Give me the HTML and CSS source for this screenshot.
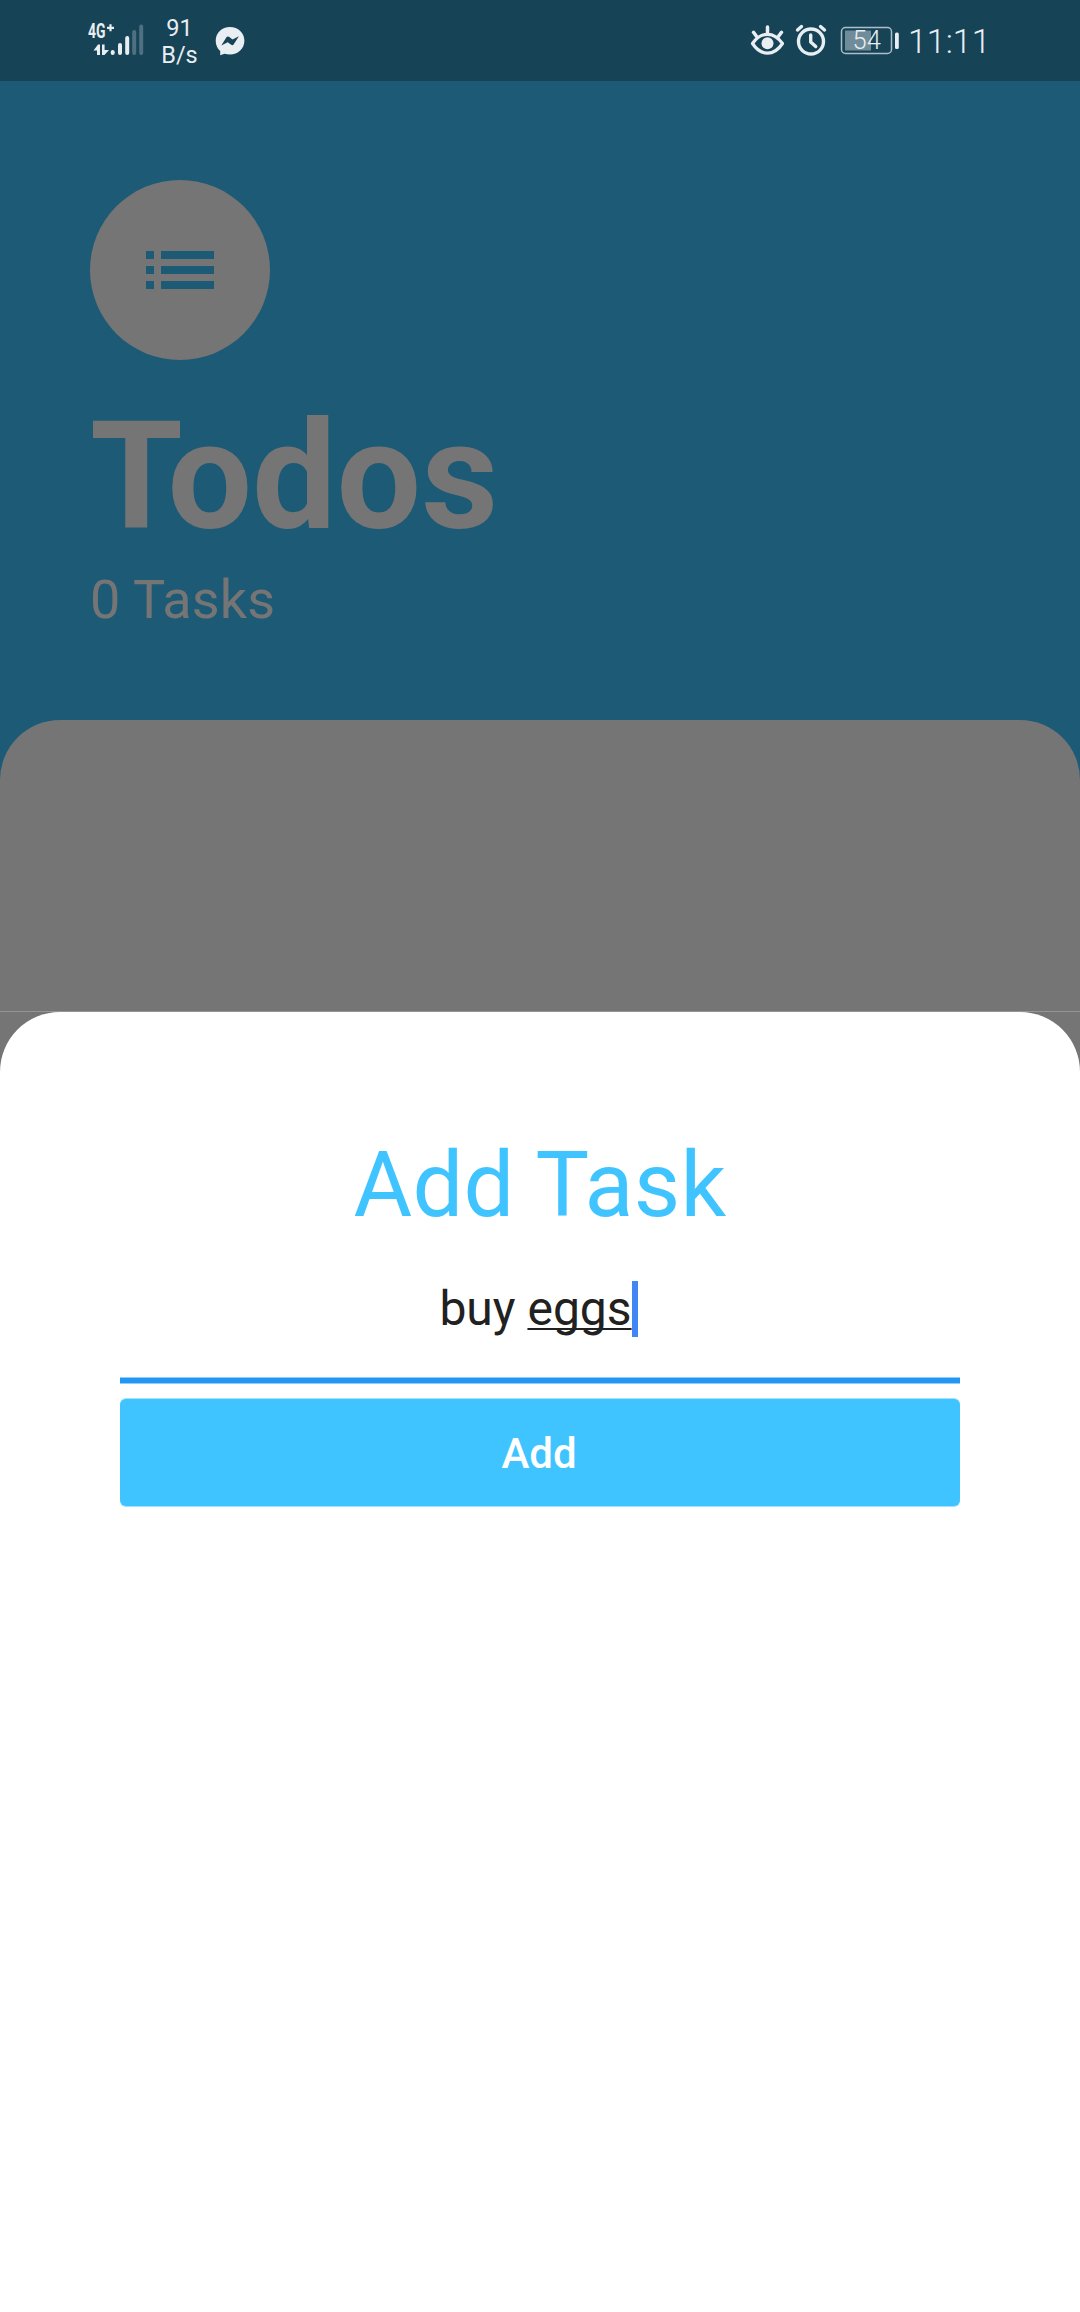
FILE: index.html
```html
<!DOCTYPE html>
<html lang="en">
<head>
<meta charset="utf-8">
<title>Todos</title>
<link rel="stylesheet" href="styles.css">
</head>
<body>
<div class="screen">
  <header class="status">
    <svg class="signal" width="58" height="40" viewBox="87 18 58 40">
      <text class="signal-label" x="88" y="38.300" textLength="17.5" lengthAdjust="spacingAndGlyphs">4G</text>
      <path class="stroke" stroke-width="2.200" d="M107 27.8h7M110.500 24.300v7"/>
      <path class="fill" d="M93.500 50.500l4.500-6h2V55h-3v-4.500zM102 44.500h2.600v5.500h4.400l-4.500 5H102z"/>
      <g class="stroke" stroke-width="4" stroke-linecap="round">
        <path d="M112.700 52v1M120 45v8M127.200 38v15"/>
        <path opacity=".27" d="M134.200 32v21M141.200 26.500v26.500"/>
      </g>
    </svg>
    <div class="speed"><span>91</span><span>B/s</span></div>
    <svg class="messenger" width="30" height="30" viewBox="215 26 30 30">
      <path class="fill" d="M230 27c-8.200 0-14.300 6-14.300 13.800 0 4.200 1.700 7.700 4.500 10.200v4.200l4.300-1.400c1.700.5 3.500.8 5.500.8 8.200 0 14.400-6 14.400-13.800S238.200 27 230 27z"/>
      <path fill="#174357" d="M221.300 45.400l5.300-8.300q1-1.200 2.400-.3l3.500 2.600 6.400-3.200-5.300 8.300q-1 1.200-2.400.3l-3.500-2.600z"/>
    </svg>
    <div class="status-right">
      <svg width="34" height="32" viewBox="750 24 34 32">
        <path class="stroke" stroke-width="3.200" stroke-linejoin="round" d="M752.500 43.500q6.500-9.200 15-9.200t15 9.200q-6.500 9.700-15 9.700t-15-9.700z"/>
        <circle class="fill" cx="767.500" cy="43.200" r="6"/>
        <path class="stroke" stroke-width="3.500" stroke-linecap="round" d="M767.500 27v6M753.500 32.300l3.500 4.700M781.500 32.300l-3.500 4.700"/>
      </svg>
      <svg class="alarm" width="34" height="34" viewBox="794 23 34 34">
        <g class="stroke" stroke-width="3.400" stroke-linecap="round">
          <circle cx="811" cy="41.500" r="12.500"/>
          <path d="M797.500 30l4-3.500M820.500 26.500l4 3.500" />
          <path stroke-linejoin="round" d="M810.700 35v7l5 4.500"/>
        </g>
      </svg>
      <svg class="battery" width="60" height="32" viewBox="840 25 60 32">
        <rect x="841.500" y="27.500" width="50" height="26" rx="4" fill="none" stroke="#adbec6" stroke-width="1.500"/>
        <rect x="845" y="30.500" width="26" height="20" fill="#708c98"/>
        <text class="battery-label" x="852.500" y="49.300">54</text>
        <rect class="fill" x="895" y="32.500" width="3.800" height="16.500" rx="1.500"/>
      </svg>
      <span class="clock">11:11</span>
    </div>
  </header>

  <main class="overview">
    <div class="avatar">
      <svg width="68" height="38" viewBox="0 0 68 38"><path fill="#1d5a75" d="M0 0h8v8H0zM15 0h53v8H15zM0 15h8v8H0zM15 15h53v8H15zM0 30h8v8H0zM15 30h53v8H15z"/></svg>
    </div>
    <h1><span class="initial">T</span>odos</h1>
    <p class="count">0 Tasks</p>
  </main>

  <section class="list"></section>

  <section class="sheet-area">
    <div class="sheet">
      <h2>Add Task</h2>
      <div class="field"><span>buy&nbsp;</span><span class="composing">eggs</span><i class="caret"></i></div>
      <button class="add" type="button">Add</button>
    </div>
  </section>
</div>
</body>
</html>
```
FILE: styles.css
```css
* { box-sizing: border-box; }
body { margin: 0; background: #fff; font-family: Roboto, sans-serif; }
h1, h2, p { margin: 0; }
svg { display: block; flex: none; }

.screen {
  width: 1080px;
  height: 2312px;
  display: flex;
  flex-direction: column;
  overflow: hidden;
  background: #1d5a75;
}

.status {
  height: 81px;
  flex: none;
  display: flex;
  align-items: flex-start;
  padding: 0 90px 0 87px;
  background: #174357;
  color: #e8eef1;
}
.fill { fill: #e8eef1; }
.stroke { fill: none; stroke: #e8eef1; }
.signal { margin-top: 18px; }
.signal-label { font: 700 19.5px Roboto, sans-serif; fill: #e8eef1; }
.speed {
  width: 50px;
  margin: 15px 0 0 9.5px;
  display: flex;
  flex-direction: column;
  align-items: center;
  font-size: 23.5px;
  line-height: 27px;
}
.messenger { margin: 26px 0 0 10.5px; }
.status-right { margin-left: auto; display: flex; align-items: flex-start; }
.status-right svg { margin-top: 24px; }
.status-right .alarm { margin: 23px 0 0 10px; }
.status-right .battery { margin: 25px 0 0 12px; }
.battery-label { font: 300 25.5px Roboto, sans-serif; fill: #e8eef1; }
.clock {
  margin: 21px 0 0 8px;
  width: 82px;
  font-size: 34px;
  font-weight: 300;
  line-height: 40px;
  white-space: nowrap;
}

.overview { height: 639px; flex: none; padding: 99px 90px 0; color: #757575; }
.avatar {
  width: 180px;
  height: 180px;
  border-radius: 50%;
  background: #757575;
  display: flex;
  align-items: center;
  justify-content: center;
}
h1 {
  margin-top: 29px;
  font-size: 150px;
  font-weight: 700;
  line-height: 176px;
}
.initial { letter-spacing: -15.5px; }
.count { margin-top: 3px; font-size: 54px; line-height: 63px; letter-spacing: .1px; }

.list {
  height: 291px;
  flex: none;
  border-radius: 60px 60px 0 0;
  background: #757575;
}
.sheet-area { flex: 1; background: #757575; border-top: 1px solid #959595; }
.sheet {
  height: 100%;
  padding: 121px 120px 0;
  border-radius: 60px 60px 0 0;
  background: #fff;
  display: flex;
  flex-direction: column;
}
h2 {
  font-size: 90px;
  font-weight: 400;
  line-height: 106px;
  text-align: center;
  letter-spacing: .3px;
  color: #40c4ff;
}
.field {
  display: flex;
  justify-content: center;
  align-items: flex-start;
  height: 144px;
  padding: 42px 3px 0 0;
  border-bottom: 5px solid #2196f3;
  box-shadow: 0 1px #90cbf9, inset 0 -1px #90cbf9;
  font-size: 48px;
  line-height: 56px;
  color: #212121;
}
.composing {
  text-decoration: underline 2px;
  text-underline-offset: 3px;
  text-decoration-skip-ink: none;
}
.caret { width: 6px; height: 56px; background: #4285f4; }
.add {
  height: 107px;
  margin-top: 16px;
  padding: 2px 2px 0 0;
  border: 0;
  border-radius: 6px;
  background: #40c4ff;
  box-shadow: 0 1px #a0e2ff, 0 -1px #a0e2ff;
  color: #fff;
  font: 500 42px/50px Roboto, sans-serif;
}
```
